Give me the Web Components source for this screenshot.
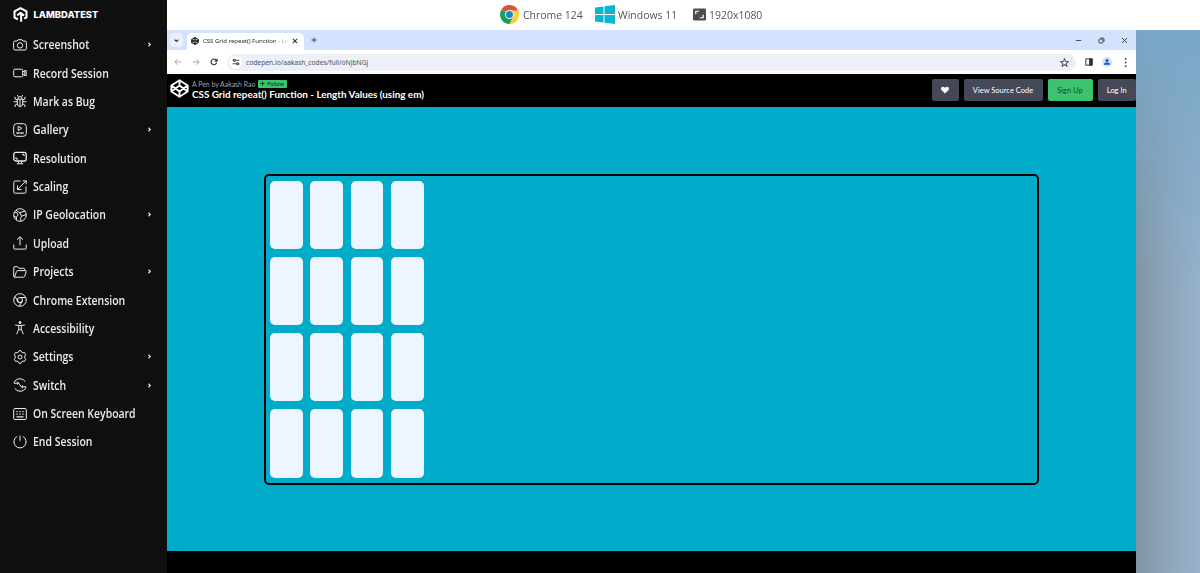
<!DOCTYPE html>
<html lang="en">
<head>
<meta charset="utf-8">
<title>LambdaTest</title>
<style>
    html, body {
        margin: 0;
        height: 573px;
        overflow: hidden;
    }

    body {
        font-family: "Open Sans", "Liberation Sans", sans-serif;
    }
</style>
</head>
<body>
<live-session></live-session>

<script>
const ICONS = {
    camera: `<path d="M4.2 3 5 1.700h4L9.800 3h2.200q1.400 0 1.400 1.400v6.200q0 1.400-1.400 1.400H2q-1.400 0-1.400-1.400V4.400Q.6 3 2 3z"/><circle cx="7" cy="7.400" r="2.700"/><path d="M11.200 5h.4"/>`,
    record: `<rect x=".7" y="3.200" width="9" height="7.600" rx="1.300"/><path d="M9.700 6 12 4.500h1.200v5.200H12L9.700 8.200M11.800 4.800v4.700"/>`,
    bug: `<path d="M4.300 5.200h5.400v4q0 3.300-2.700 3.300T4.300 9.200zM4.900 5q0-2.400 2.100-2.400T9.100 5M5.300 2.800 4.300 1M8.700 2.800l1-1.800M7 5.500v6.700M4.300 7.800H.6M9.700 7.800h3.700M4.300 6 2 5V2.800M9.700 6 12 5V2.800M4.500 9.800 2.200 11v2M9.500 9.800l2.300 1.200v2"/>`,
    gallery: `<rect x=".7" y=".7" width="12.600" height="12.600" rx="3"/><path d="M5.200 3.300v4.200l3.600-2.100zM3 10h8M5 9.200v1.600M8.800 9.200v1.600"/>`,
    resolution: `<rect x=".8" y="1.300" width="12.400" height="8.700" rx="2" stroke-width="1.300"/><path d="M9 3.300h2v1.900M5 8H3V6.100M5.600 10.200v2.300M8.400 10.200v2.300M3.800 12.800h6.400"/>`,
    scaling: `<path d="M7.500 1H2.200Q.8 1 .8 2.400v9.400q0 1.400 1.400 1.400h9.400q1.400 0 1.400-1.400V6.500M13.200.8 4.500 9.500M9.700.8h3.500v3.500M4.500 5.600v3.900h4"/>`,
    globe: `<circle cx="7" cy="7" r="6.300"/><path d="m1.300 4.300 2.500.3L5 7l-1.700 2.200L3.600 12M3 2.200l3.600 2.500L12.300 3M6.600 4.700l2 3.500 4.700-1.700M8.600 8.200l-1.300 2.400 1 2.500M1 8.500l2.500.8"/>`,
    upload: `<path d="M7 9.300V.9M4 3.700 7 .8l3 2.900M.8 8.500v3.700q0 .9.900.9h10.600q.9 0 .9-.9V8.500"/>`,
    folder: `<path d="M1.500 12.200Q.7 12 .7 11V3q0-1.300 1.300-1.300h2.500L6 3.300h4.600q1.200 0 1.200 1.400v.9M1.500 12.200l2-5.700q.3-.9 1.200-.9h7.600q1.200 0 .9 1l-1.400 4.600q-.3 1-1.300 1z"/>`,
    chrome: `<circle cx="7" cy="7" r="6.300"/><circle cx="7" cy="7" r="2.500"/><path d="M7 4.500h5.700M4.800 8.300 2 3.400M9.200 8.300l-2.900 4.900M4.400 6.200v2.500L7 9.900l2.500-1.200"/>`,
    person: `<circle cx="7" cy="1.500" r="1" fill="currentColor"/><path d="M2.200 4q4.800 1.200 9.600 0M5.700 4.600v3.600l-2 5M8.300 4.600v3.600l2 5M5.700 8.700h2.600"/>`,
    gear: `<path d="M5.600 2 6.200.6h1.600L8.400 2l1.500.8 1.600-.3 1.200 2-.9 1.400v2l.9 1.500-1.200 2-1.600-.3-1.500.9-.6 1.400H6.200L5.600 12l-1.500-.9-1.600.3-1.200-2 .9-1.500v-2l-.9-1.400 1.200-2 1.600.3z" stroke-linejoin="round"/><circle cx="7" cy="7" r="2"/>`,
    swap: `<path d="M1 5.200Q2.200.8 7 .7q3.500.1 5.300 3M13 8.800q-1.300 4.400-6 4.500-3.500-.1-5.300-3M1 5.200h4.300q1.300 0 1.700 1.800.4 1.800 1.700 1.800H13M4 3.800l1.500 1.400L4 6.600M10 7.400 8.500 8.800l1.500 1.400"/>`,
    keyboard: `<rect x=".7" y="1.500" width="12.600" height="11" rx="1"/><path d="M3.400 4.700h1.200M6.400 4.700h1.200M9.400 4.700h1.200M3.400 7.200h1.200M6.400 7.200h1.200M9.400 7.200h1.200M3.500 9.800h7" stroke-width="1.300"/>`,
    power: `<path d="M7 .5v5.300M4.200 1.400a6.100 6.100 0 1 0 5.600 0"/>`,
    heart: `<path d="M7 12 2 7Q.5 4.800 2.200 3 4.600 1.200 7 4q2.400-2.800 4.800-1Q13.500 4.800 12 7z" fill="currentColor" stroke="none"/>`,
    codepen: `<path d="m7 .9 6 3.900v4.400l-6 3.900-6-3.900V4.800zM7 .9v3.900M7 9.200v3.900M1 4.800l6 4.400 6-4.400M1 9.200l6-4.400 6 4.400" stroke-linejoin="round"/>`,
    down: `<path d="m4 5.500 3 3 3-3"/>`,
    next: `<path d="m5 3.500 3.500 3.500L5 10.500"/>`,
    back: `<path d="M12.500 7h-11M6.500 2l-5 5 5 5"/>`,
    forward: `<path d="M1.500 7h11M7.500 2l5 5-5 5"/>`,
    reload: `<path d="M11.600 8.400A5 5 0 1 1 10.800 3.700l1.400 1.500M12.300 1.200v4.200H8.100"/>`,
    tune: `<path d="M1 4h1.500M6.500 4H13M1 10h6.500M11.500 10H13"/><circle cx="4.200" cy="4" r="1.800"/><circle cx="9.700" cy="10" r="1.800"/>`,
    star: `<path d="m7 1.300 1.700 3.900 4.300.4-3.200 2.800.9 4.200L7 10.400l-3.700 2.200.9-4.200L1 5.600l4.300-.4z"/>`,
    panel: `<path d="M1.500 1.500h11v11h-11z"/><path d="M8 1.500h4.500v11H8z" fill="currentColor"/>`,
    user: `<circle cx="7" cy="4.300" r="2.700" fill="currentColor" stroke="none"/><path d="M1.500 12q0-4.200 5.500-4.200t5.500 4.200z" fill="currentColor" stroke="none"/>`,
    dots: `<path d="M6 0h2.400v2.400H6zM6 5.800h2.400v2.400H6zM6 11.600h2.400V14H6z" fill="currentColor" stroke="none"/>`,
    close: `<path d="m2 2 10 10M12 2 2 12"/>`,
    plus: `<path d="M7 1v12M1 7h12"/>`,
    minimize: `<path d="M1.500 7h11"/>`,
    restore: `<rect x="2" y="4" width="8" height="8" rx="2"/><path d="M5 2h4.500Q12 2 12 4.500V9"/>`,
    lambda: `<path d="M4.600 11.600 1.400 9.800V4.100L7 1l5.600 3.100v5.500l-2 1.300M4 7.800l3-2.300 3.400 2.400M7.600 6v7.800" stroke-linejoin="round"/>`
};

class UiIcon extends HTMLElement {
    connectedCallback() {
        const shadow = this.attachShadow({ mode: "open" });
        const size = this.getAttribute("size") || 14;
        const weight = this.getAttribute("weight") || 1;

        shadow.innerHTML = `
        <style>
            :host {
                display: block;
                flex: none;
                width: ${size}px;
                height: ${size}px;
            }

            svg {
                display: block;
            }
        </style>

        <svg width="${size}" height="${size}" viewBox="0 0 14 14" fill="none" stroke="currentColor" stroke-width="${weight}">${ICONS[this.getAttribute("name")]}</svg>`;
    }
}

customElements.define("ui-icon", UiIcon);

class MenuItem extends HTMLElement {
    connectedCallback() {
        const shadow = this.attachShadow({ mode: "open" });
        const arrow = this.hasAttribute("more") ? `<ui-icon name="next" size="7" weight="2.200"></ui-icon>` : "";

        shadow.innerHTML = `
        <style>
            :host {
                display: flex;
                align-items: center;
                height: 28.380px;
                padding: 0 14px 0 13px;
                font-size: 12px;
                font-weight: 600;
                color: #ececec;
                white-space: nowrap;
            }

            .label {
                flex: 1;
                margin-left: 6px;
                /* narrower letters than Open Sans has */
                transform: scaleX(.87);
                transform-origin: left;
            }
        </style>

        <ui-icon name="${this.getAttribute("icon")}"></ui-icon>
        <span class="label"><slot></slot></span>
        ${arrow}`;
    }
}

customElements.define("menu-item", MenuItem);

class SideBar extends HTMLElement {
    connectedCallback() {
        const shadow = this.attachShadow({ mode: "open" });

        shadow.innerHTML = `
        <style>
            :host {
                display: block;
                box-sizing: border-box;
                width: 167px;
                background: #0f0f0f;
            }

            .brand {
                display: flex;
                align-items: center;
                gap: 5.500px;
                height: 28.500px;
                padding: 0 0 2px 13px;
                color: #fff;
                font: 800 9.400px Inter, sans-serif;
            }
        </style>

        <div class="brand"><ui-icon name="lambda" size="15" weight="1.900"></ui-icon><span>LAMBDATEST</span></div>
        <menu-item icon="camera" more>Screenshot</menu-item>
        <menu-item icon="record">Record Session</menu-item>
        <menu-item icon="bug">Mark as Bug</menu-item>
        <menu-item icon="gallery" more>Gallery</menu-item>
        <menu-item icon="resolution">Resolution</menu-item>
        <menu-item icon="scaling">Scaling</menu-item>
        <menu-item icon="globe" more>IP Geolocation</menu-item>
        <menu-item icon="upload">Upload</menu-item>
        <menu-item icon="folder" more>Projects</menu-item>
        <menu-item icon="chrome">Chrome Extension</menu-item>
        <menu-item icon="person">Accessibility</menu-item>
        <menu-item icon="gear" more>Settings</menu-item>
        <menu-item icon="swap" more>Switch</menu-item>
        <menu-item icon="keyboard">On Screen Keyboard</menu-item>
        <menu-item icon="power">End Session</menu-item>`;
    }
}

customElements.define("side-bar", SideBar);

class SessionInfo extends HTMLElement {
    connectedCallback() {
        const shadow = this.attachShadow({ mode: "open" });

        shadow.innerHTML = `
        <style>
            :host {
                display: flex;
                align-items: center;
                box-sizing: border-box;
                height: 30px;
                padding: 0 0 1px 333px;
                background: #fff;
                color: #555;
                font-size: 11.500px;
                white-space: nowrap;
            }

            svg {
                display: block;
                flex: none;
            }

            span {
                transform: scaleX(.91);
                transform-origin: left;
            }

            .browser { width: 72px; margin-left: 3.500px; }
            .system { width: 75px; margin-left: 3px; }
            .size { margin-left: 3px; }
        </style>

        <svg width="19" height="19" viewBox="0 0 20 20">
            <path d="M10 10 1.340 5A10 10 0 0 1 18.660 5z" fill="#dc5044"/>
            <path d="M10 10V20A10 10 0 0 1 1.340 5z" fill="#1a9e5c"/>
            <path d="M10 10 18.660 5A10 10 0 0 1 10 20L14.330 12.500z" fill="#fdcd40"/>
            <path d="M5.670 12.500 10 10l4.330 2.500L10 20z" fill="#1a9e5c"/>
            <path d="M14 12.300 10 20A10 10 0 0 0 19 5.700h-9z" fill="#fdcd40"/>
            <circle cx="10" cy="10" r="4.700" fill="#fff"/>
            <circle cx="10" cy="10" r="3.700" fill="#1587c5"/>
        </svg>
        <span class="browser">Chrome 124</span>
        <svg width="20" height="19" viewBox="0 0 20 19" fill="#08b8cd">
            <path d="M0 2.600 8.500 1.400v7.700H0zM9.500 1.300 20 0v9.100H9.500zM0 10h8.500v7.600L0 16.400zM9.500 10H20v9L9.500 17.700z"/>
        </svg>
        <span class="system">Windows 11</span>
        <svg width="13" height="13" viewBox="0 0 14 13">
            <rect width="14" height="13" rx="1.500" fill="#4c4c4c"/>
            <path d="M3 6.200V3h3.600M11 6.800V10H7.400" fill="none" stroke="#fff" stroke-width="1.300"/>
        </svg>
        <span class="size">1920x1080</span>`;
    }
}

customElements.define("session-info", SessionInfo);

class BrowserChrome extends HTMLElement {
    connectedCallback() {
        const shadow = this.attachShadow({ mode: "open" });

        shadow.innerHTML = `
        <style>
            :host {
                display: block;
                color: #333;
                font-family: "Noto Sans", sans-serif;
                white-space: nowrap;
            }

            .tabs, .toolbar, .tab, .address {
                display: flex;
                align-items: center;
                box-sizing: border-box;
            }

            .tabs {
                height: 20px;
                padding: 0 8px 0 3px;
                background: #d3e3fd;
            }

            .search {
                width: 13px;
                height: 14px;
                border-radius: 4px;
                background: #e9f1fe;
                display: grid;
                place-items: center;
            }

            .tab {
                align-self: flex-end;
                width: 117px;
                height: 17px;
                margin: 0 7px 0 4px;
                padding: 0 0 2px 4px;
                border-radius: 5px 5px 0 0;
                background: #fff;
                font-size: 6px;
            }

            .title {
                width: 86px;
                margin: 0 3px 0 4px;
                background: linear-gradient(90deg, #222 82%, #e4e4e4 98%);
                background-clip: text;
                -webkit-background-clip: text;
                color: transparent;
            }

            .window {
                display: flex;
                gap: 16px;
                margin-left: auto;
            }

            .toolbar {
                height: 24px;
                padding: 0 6px 0 7px;
                background: #fff;
            }

            .nav {
                display: flex;
                gap: 10px;
                color: #9a9a9a;
            }

            .nav :last-child {
                color: #333;
            }

            .address {
                flex: 1;
                height: 17px;
                margin: 0 9px 0 9px;
                padding: 0 7px 0 2px;
                border-radius: 9px;
                background: #edf0f6;
                font-size: 6.700px;
                color: #4d5053;
            }

            .site {
                display: grid;
                place-items: center;
                width: 13px;
                height: 13px;
                margin-right: 4px;
                border-radius: 50%;
                background: #fff;
            }

            .url {
                flex: 1;
            }

            .avatar {
                display: grid;
                place-items: center;
                width: 10px;
                height: 10px;
                margin: 0 9px 0 9px;
                border-radius: 50%;
                background: #cfe2fc;
                color: #0b57d0;
            }
        </style>

        <div class="tabs">
            <span class="search"><ui-icon name="down" size="9" weight="1.800"></ui-icon></span>
            <div class="tab">
                <ui-icon name="codepen" size="8" weight="2.200"></ui-icon>
                <span class="title">CSS Grid repeat() Function - Le</span>
                <ui-icon name="close" size="6" weight="2.400"></ui-icon>
            </div>
            <ui-icon name="plus" size="6" weight="2"></ui-icon>
            <div class="window">
                <ui-icon name="minimize" size="7" weight="1.600"></ui-icon>
                <ui-icon name="restore" size="7" weight="1.800"></ui-icon>
                <ui-icon name="close" size="7" weight="1.800"></ui-icon>
            </div>
        </div>
        <div class="toolbar">
            <div class="nav">
                <ui-icon name="back" size="8" weight="1.500"></ui-icon>
                <ui-icon name="forward" size="8" weight="1.500"></ui-icon>
                <ui-icon name="reload" size="8" weight="2"></ui-icon>
            </div>
            <div class="address">
                <span class="site"><ui-icon name="tune" size="8" weight="2"></ui-icon></span>
                <span class="url">codepen.io/aakash_codes/full/oNJbNGj</span>
                <ui-icon name="star" size="9" weight="1.600"></ui-icon>
            </div>
            <ui-icon name="panel" size="8" weight="1.700"></ui-icon>
            <span class="avatar"><ui-icon name="user" size="8"></ui-icon></span>
            <ui-icon name="dots" size="9"></ui-icon>
        </div>`;
    }
}

customElements.define("browser-chrome", BrowserChrome);

class PenButton extends HTMLElement {
    connectedCallback() {
        const shadow = this.attachShadow({ mode: "open" });

        shadow.innerHTML = `
        <style>
            :host {
                display: flex;
                align-items: center;
                justify-content: center;
                box-sizing: border-box;
                flex: none;
                height: 22px;
                border-radius: 2px;
                background: #444857;
                color: #fff;
                font-size: 7.500px;
            }

            :host([primary]) {
                background: #3dc270;
                color: #14482a;
            }
        </style>

        <slot></slot>`;
    }
}

customElements.define("pen-button", PenButton);

class PenHeader extends HTMLElement {
    connectedCallback() {
        const shadow = this.attachShadow({ mode: "open" });

        shadow.innerHTML = `
        <style>
            :host {
                display: flex;
                align-items: center;
                box-sizing: border-box;
                height: 33px;
                padding: 0 0 1px 3px;
                background: #000;
                color: #fff;
                font-family: Lato, sans-serif;
                white-space: nowrap;
            }

            .logo {
                margin-bottom: 3px;
            }

            .name {
                flex: 1;
                margin-left: 3px;
            }

            .author {
                display: flex;
                align-items: center;
                gap: 2.500px;
                height: 9px;
                font-size: 6.900px;
                color: #a3a4aa;
            }

            .follow {
                display: flex;
                align-items: center;
                gap: 2px;
                height: 8px;
                padding: 0 2.500px;
                border-radius: 1px;
                background: #3dc270;
                color: #0c3018;
                font-size: 5.800px;
            }

            .title {
                font-size: 9.880px;
                font-weight: 700;
                line-height: 13px;
            }

            .buttons {
                display: flex;
                gap: 5px;
            }
        </style>

        <ui-icon class="logo" name="codepen" size="19" weight="1.400"></ui-icon>
        <div class="name">
            <div class="author"><span>A Pen by Aakash Rao</span><span class="follow"><ui-icon name="plus" size="5" weight="2.600"></ui-icon><span>Follow</span></span></div>
            <div class="title">CSS Grid repeat() Function - Length Values (using em)</div>
        </div>
        <div class="buttons">
            <pen-button style="width: 27px"><ui-icon name="heart" size="10"></ui-icon></pen-button>
            <pen-button style="width: 79px">View Source Code</pen-button>
            <pen-button style="width: 45px" primary>Sign Up</pen-button>
            <pen-button style="width: 38.500px">Log In</pen-button>
        </div>`;
    }
}

customElements.define("pen-header", PenHeader);

class GridDemo extends HTMLElement {
    connectedCallback() {
        const shadow = this.attachShadow({ mode: "open" });
        let cells = "";

        for (let i = 0; i < 16; i ++) {
            cells += "<div></div>";
        }

        shadow.innerHTML = `
        <style>
            :host {
                display: block;
                box-sizing: border-box;
                height: 444px;
                padding: 67px 97px 0 96.500px;
                background: #00acca;
            }

            .grid {
                display: grid;
                box-sizing: border-box;
                height: 311px;
                grid-template-columns: repeat(4, 32.700px);
                grid-template-rows: repeat(4, 68.500px);
                gap: 7.700px;
                padding: 4.500px;
                border: 2px solid #000;
                border-radius: 5px;
            }

            .grid div {
                border-radius: 5px;
                background: #edf5fe;
            }
        </style>

        <div class="grid">${cells}</div>`;
    }
}

customElements.define("grid-demo", GridDemo);

class LiveSession extends HTMLElement {
    connectedCallback() {
        const shadow = this.attachShadow({ mode: "open" });

        shadow.innerHTML = `
        <style>
            :host {
                display: flex;
                width: 1200px;
                height: 573px;
            }

            .main {
                display: flex;
                flex-direction: column;
                flex: 1;
            }

            .desktop {
                display: flex;
                flex: 1;
                background: #000;
            }

            .browser {
                width: 969px;
            }

            .wallpaper {
                flex: 1;
                background:
                    linear-gradient(190deg, #79a7c8 0, rgba(121, 167, 200, .75) 12%, rgba(121, 167, 200, 0) 50%),
                    linear-gradient(90deg, #8194a1 0, #8ea4b8 45%, #98b2cc 100%);
            }
        </style>

        <side-bar></side-bar>
        <div class="main">
            <session-info></session-info>
            <div class="desktop">
                <div class="browser">
                    <browser-chrome></browser-chrome>
                    <pen-header></pen-header>
                    <grid-demo></grid-demo>
                </div>
                <div class="wallpaper"></div>
            </div>
        </div>`;
    }
}

customElements.define("live-session", LiveSession);
</script>
</body>
</html>
